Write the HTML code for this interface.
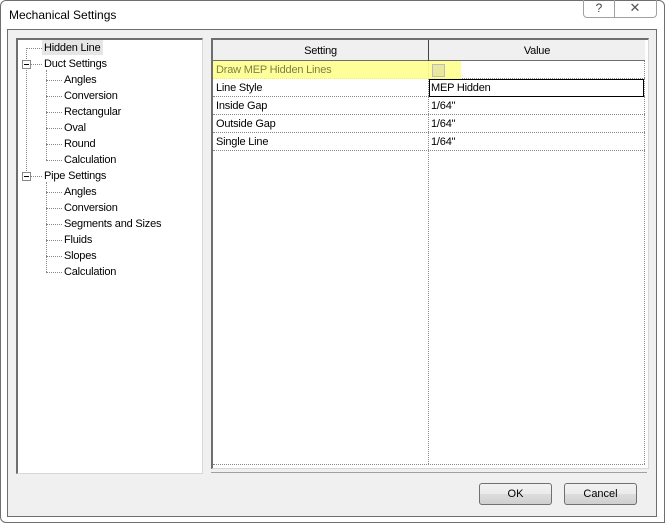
<html><head><style>
body{margin:0;width:665px;height:523px;background:#fff;font-family:"Liberation Sans",Tahoma,sans-serif;font-size:11px;position:relative;overflow:hidden}
.a{position:absolute}
.t{position:absolute;font-size:11px;letter-spacing:-0.2px;color:#000;line-height:14px;white-space:nowrap}
.dv{position:absolute;border-left:1px dotted #888;width:0}
.dh{position:absolute;border-top:1px dotted #888;height:0}
.btn{position:absolute;width:71px;height:20px;border:1px solid #707070;border-radius:3px;background:linear-gradient(#f2f2f2,#ebebeb 50%,#dddddd 51%,#cfcfcf);text-align:center;line-height:20px;font-size:11px}
.row{position:absolute;left:213px;width:432px;height:17px;border-bottom:1px dotted #888}
</style></head><body>
<div class="a" style="left:0;top:0;width:663px;height:521px;border:1px solid #6e6e6e;border-radius:6px 6px 0 6px;background:#fff"></div>
<div class="t" style="left:9px;top:8px;font-size:12px;line-height:15px;color:#000;letter-spacing:0">Mechanical Settings</div>
<div class="a" style="left:583px;top:0;width:30px;height:17px;border:1px solid #a0a0a0;border-top:none;border-radius:0 0 0 4px;text-align:center;font-size:12px;line-height:16px;color:#444">?</div>
<div class="a" style="left:614px;top:0;width:42px;height:17px;border:1px solid #a0a0a0;border-top:none;border-left:none;border-radius:0 0 4px 0;text-align:center;font-size:13px;line-height:16px;color:#555">✕</div>
<div class="a" style="left:7px;top:29px;width:648px;height:486px;border:1px solid #6e6e6e;background:#f0f0f0"></div>
<!-- tree -->
<div class="a" style="left:16px;top:38px;width:184px;height:433px;border:1px solid #d8d8d8;border-left:2px solid #6e6e6e;border-top:2px solid #6e6e6e;background:#fff"></div>
<div class="dv" style="left:26px;top:48px;height:127px"></div>
<div class="dh" style="left:26px;top:48px;width:16px"></div>
<div class="a" style="left:42px;top:40px;width:61px;height:15px;background:#e6e6e6"></div>
<div class="dh" style="left:31px;top:64px;width:11px"></div>
<div class="dh" style="left:31px;top:176px;width:11px"></div>
<div class="a" style="left:22px;top:60px;width:7px;height:7px;border:1px solid #888;background:#fff"></div>
<div class="a" style="left:24px;top:64px;width:5px;height:1px;background:#000"></div>
<div class="a" style="left:22px;top:172px;width:7px;height:7px;border:1px solid #888;background:#fff"></div>
<div class="a" style="left:24px;top:176px;width:5px;height:1px;background:#000"></div>
<div class="dv" style="left:46px;top:70px;height:90px"></div>
<div class="dv" style="left:46px;top:182px;height:90px"></div>
<div class="dh" style="left:46px;top:80px;width:16px"></div><div class="dh" style="left:46px;top:96px;width:16px"></div><div class="dh" style="left:46px;top:112px;width:16px"></div><div class="dh" style="left:46px;top:128px;width:16px"></div><div class="dh" style="left:46px;top:144px;width:16px"></div><div class="dh" style="left:46px;top:160px;width:16px"></div>
<div class="dh" style="left:46px;top:192px;width:16px"></div><div class="dh" style="left:46px;top:208px;width:16px"></div><div class="dh" style="left:46px;top:224px;width:16px"></div><div class="dh" style="left:46px;top:240px;width:16px"></div><div class="dh" style="left:46px;top:256px;width:16px"></div><div class="dh" style="left:46px;top:272px;width:16px"></div>
<div class="t" style="left:44px;top:41px">Hidden Line</div>
<div class="t" style="left:44px;top:57px">Duct Settings</div>
<div class="t" style="left:64px;top:73px">Angles</div>
<div class="t" style="left:64px;top:89px">Conversion</div>
<div class="t" style="left:64px;top:105px">Rectangular</div>
<div class="t" style="left:64px;top:121px">Oval</div>
<div class="t" style="left:64px;top:137px">Round</div>
<div class="t" style="left:64px;top:153px">Calculation</div>
<div class="t" style="left:44px;top:169px">Pipe Settings</div>
<div class="t" style="left:64px;top:185px">Angles</div>
<div class="t" style="left:64px;top:201px">Conversion</div>
<div class="t" style="left:64px;top:217px">Segments and Sizes</div>
<div class="t" style="left:64px;top:233px">Fluids</div>
<div class="t" style="left:64px;top:249px">Slopes</div>
<div class="t" style="left:64px;top:265px">Calculation</div>
<!-- grid -->
<div class="a" style="left:211px;top:38px;width:435px;height:428px;border:1px solid #d8d8d8;border-left:2px solid #6e6e6e;border-top:2px solid #6e6e6e;background:#fff"></div>
<div class="a" style="left:213px;top:40px;width:432px;height:20px;background:#f0f0f0;border-bottom:1px solid #6e6e6e"></div>
<div class="a" style="left:428px;top:40px;width:1px;height:21px;background:#444"></div>
<div class="t" style="left:213px;top:44px;width:215px;text-align:center">Setting</div>
<div class="t" style="left:429px;top:44px;width:216px;text-align:center">Value</div>
<div class="dv" style="left:428px;top:61px;height:403px"></div>
<div class="dv" style="left:644px;top:61px;height:403px"></div>
<div class="dh" style="left:213px;top:464px;width:432px"></div>
<div class="row" style="top:61px"></div><div class="row" style="top:79px"></div><div class="row" style="top:97px"></div><div class="row" style="top:115px"></div><div class="row" style="top:133px"></div>
<div class="a" style="left:213px;top:61px;width:248px;height:18px;background:#ffff88;opacity:.85"></div>
<div class="a" style="left:432px;top:64px;width:11px;height:11px;border:1px solid #bbb;background:#e8e8a0"></div>
<div class="t" style="left:216px;top:63px;color:#7f7f45">Draw MEP Hidden Lines</div>
<div class="a" style="left:429px;top:79px;width:213px;height:16px;border:1px solid #000;background:#fff"></div>
<div class="t" style="left:216px;top:81px">Line Style</div><div class="t" style="left:431px;top:81px">MEP Hidden</div>
<div class="t" style="left:216px;top:99px">Inside Gap</div><div class="t" style="left:431px;top:99px">1/64"</div>
<div class="t" style="left:216px;top:117px">Outside Gap</div><div class="t" style="left:431px;top:117px">1/64"</div>
<div class="t" style="left:216px;top:135px">Single Line</div><div class="t" style="left:431px;top:135px">1/64"</div>
<div class="a" style="left:211px;top:472px;width:436px;height:1px;background:#a0a0a0"></div>
<div class="btn" style="left:479px;top:483px">OK</div>
<div class="btn" style="left:564px;top:483px">Cancel</div>
</body></html>
